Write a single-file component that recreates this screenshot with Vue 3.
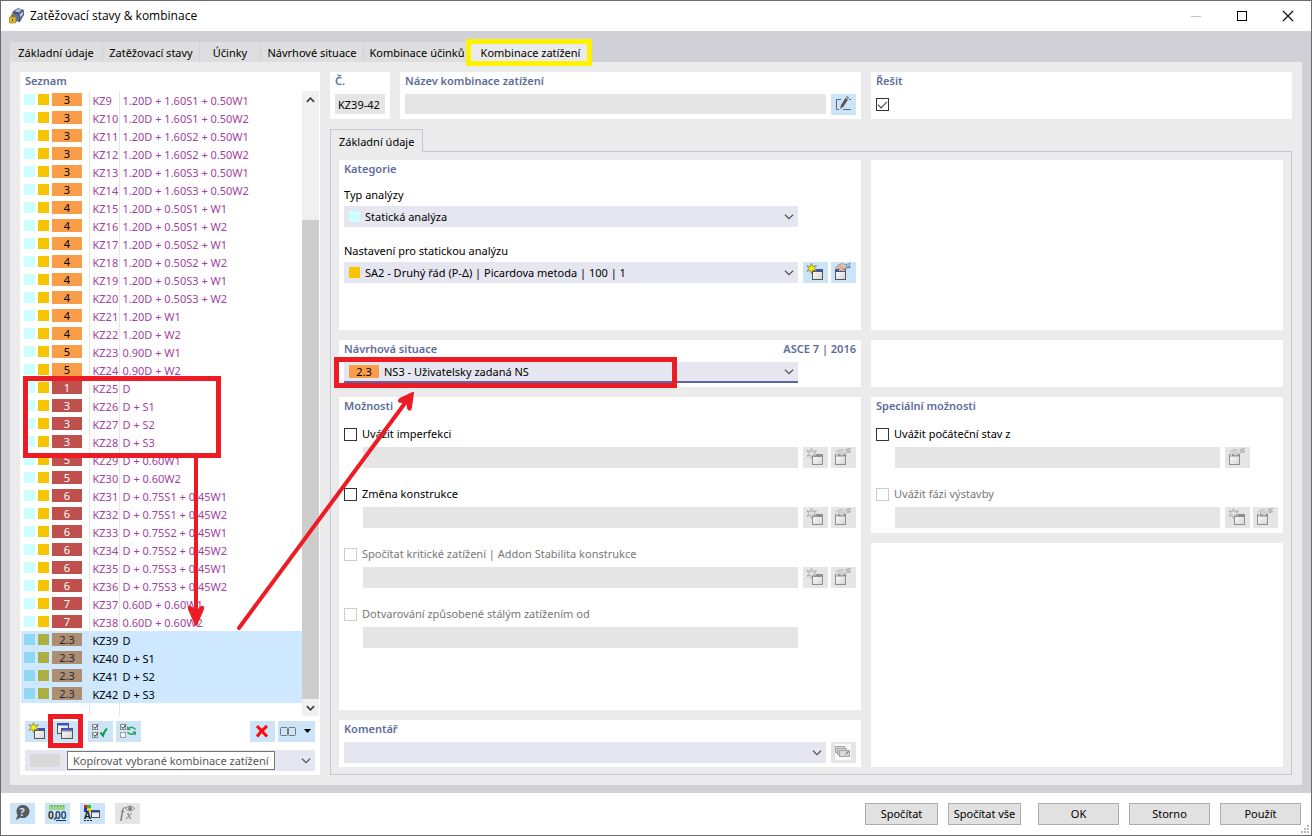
<template>
  <div class="window">
    <!-- Shared icon shapes -->
    <svg class="icon-defs" aria-hidden="true">
      <defs>
        <linearGradient id="paper" x1="0" y1="0" x2="1" y2="1">
          <stop offset="0" stop-color="#ffffff" />
          <stop offset="1" stop-color="#d4d4d4" />
        </linearGradient>
        <symbol id="icon-new" viewBox="0 0 25 21">
          <rect x="9.5" y="7.5" width="10" height="10" fill="url(#paper)" stroke="#555" />
          <rect x="10" y="7" width="9" height="3" fill="#3c50e0" />
          <path d="M9.5 9.5h10" stroke="#555" />
          <path d="M8.500 1.500l1.200 3.200 3.800-1-2.300 2.800 2.300 2.800-3.800-1-1.200 3.200-1.200-3.200-3.300 1 2-2.800-2-2.800 3.300 1z" fill="#fff200" stroke="#6d7340" stroke-width=".7" />
        </symbol>
        <symbol id="icon-new-off" viewBox="0 0 25 21">
          <rect x="9.500" y="7.500" width="10" height="10" fill="url(#paper)" stroke="#8f8f8f" />
          <rect x="9" y="7" width="11" height="3" fill="#8f8f8f" />
          <path d="M8.500 1.500l1.200 3.200 3.800-1-2.300 2.800 2.300 2.800-3.800-1-1.200 3.200-1.200-3.200-3.300 1 2-2.800-2-2.800 3.300 1z" fill="#e2e2e2" stroke="#a0a0a0" stroke-width=".8" />
        </symbol>
        <symbol id="icon-edit" viewBox="0 0 25 21">
          <rect x="4.500" y="7.500" width="10" height="10" fill="url(#paper)" stroke="#555" />
          <path d="M5 8h3" stroke="#3c50e0" stroke-width="2" />
          <path d="M4.500 9.500h10" stroke="#555" />
          <path d="M15 2l5-1-1.500 2.500L20 6l-5 .5z" fill="#5b8fc8" />
          <path d="M15 3l3-1v2l-3 1z" fill="#a9d0f0" />
          <path d="M4.500 5.500L7 3l4-1.500 4 1v4L13 7l-1.500 2L9 8.500 8 6.500l-2 .5z" fill="#dfc3a8" stroke="#9a8069" stroke-width=".6" />
          <path d="M7 5l3-1.500M9 6.500L12 5M11 8l2-2" stroke="#9a8069" stroke-width=".6" />
        </symbol>
        <symbol id="icon-edit-off" viewBox="0 0 25 21">
          <rect x="4.500" y="7.500" width="10" height="10" fill="url(#paper)" stroke="#8f8f8f" />
          <path d="M4 8.500h11" stroke="#8f8f8f" stroke-width="2" />
          <path d="M5 8h2" stroke="#fff" />
          <path d="M14 2.500l6-1-1.500 2L20 5.500l-5 1z" fill="#c4c4c4" />
          <path d="M15 2.500l5-1M17 5l3-.5" stroke="#a5a5a5" stroke-width=".8" />
          <path d="M5 5l3-2 4-1 3 1v3.500L13 7l-1.500 1.500L9 8 8 6.500 5.500 7z" fill="#dcdcdc" />
          <path d="M5 5l3-2 4-.5M7 6l3-2M9.500 7.500l3-3M12 8.500l2-3" fill="none" stroke="#adadad" stroke-width=".8" />
        </symbol>
        <symbol id="icon-copy" viewBox="0 0 25 21">
          <rect x="4.500" y="2.500" width="11" height="10" fill="url(#paper)" stroke="#555" />
          <path d="M5 3.500h10" stroke="#3c50e0" stroke-width="2" />
          <rect x="8.500" y="7.500" width="11" height="10" fill="url(#paper)" stroke="#555" />
          <path d="M9 8.500h10" stroke="#3c50e0" stroke-width="2" />
          <path d="M9 10h10" stroke="#555" stroke-width=".7" />
        </symbol>
        <symbol id="icon-check-all" viewBox="0 0 25 21">
          <g fill="#f4f4f4" stroke="#8a8a8a">
            <rect x="4.500" y="3.500" width="5" height="5" />
            <rect x="4.500" y="11.500" width="5" height="5" />
          </g>
          <path d="M5.500 5.500l1.500 2 3-4M5.500 13.500l1.500 2 3-4" fill="none" stroke="#333" />
          <path d="M12.500 11.500l2.500 3q1-4 4-7" fill="none" stroke="#0b9f43" stroke-width="2" />
        </symbol>
        <symbol id="icon-check-swap" viewBox="0 0 25 21">
          <g fill="#f4f4f4" stroke="#8a8a8a">
            <rect x="4.500" y="3.500" width="5" height="5" />
            <rect x="4.500" y="11.500" width="5" height="5" stroke="#a0a0a0" />
          </g>
          <path d="M5.500 5.500l1.500 2 3-4" fill="none" stroke="#333" />
          <path d="M19.500 8.500q-3-3.500-6.500-1.500M11.500 11q3 3.500 6.500 1.500" fill="none" stroke="#2ba35a" stroke-width="1.600" />
          <path d="M11 5v4h4zM20 14.500v-4h-4z" fill="#2ba35a" />
        </symbol>
        <symbol id="icon-delete" viewBox="0 0 25 21">
          <path d="M7 5l10 10.500M17 5Q12 9 7 15.500" fill="none" stroke="#f90d0d" stroke-width="3" />
        </symbol>
        <symbol id="icon-columns" viewBox="0 0 37 21">
          <rect x="2.500" y="6.500" width="7" height="8" rx="1" fill="none" stroke="#777" />
          <rect x="10.500" y="6.500" width="7" height="8" rx="1" fill="none" stroke="#777" />
          <path d="M26 8h7l-3.500 4z" fill="#000" />
        </symbol>
        <symbol id="icon-rename" viewBox="0 0 25 21">
          <path d="M10 5.500H5.500v10H8M12 15.500h8M18 5.500h2" fill="none" stroke="#666" />
          <path d="M9 15l1-4 4.500-7 2.500 1.500-4.500 7z" fill="#555" />
          <path d="M15 3.300l.8-1.300 2.300 1.500-.7 1.200z" fill="#777" />
        </symbol>
        <symbol id="icon-comments" viewBox="0 0 25 21">
          <rect x="4" y="2" width="16" height="16" fill="#fafafa" />
          <g fill="#d8d8d8" stroke="#a4a4a4">
            <rect x="4.500" y="4.500" width="9" height="6" />
            <rect x="6.500" y="6.500" width="9" height="6" />
            <rect x="8.500" y="8.500" width="10" height="6" />
          </g>
          <path d="M14 13l1-2 2-2 1 1-2 2z" fill="#888" />
        </symbol>
        <symbol id="icon-help" viewBox="0 0 25 21">
          <path d="M12.500 2a6.500 6.500 0 1 1-2 12.500L6 17l1.500-5A6.500 6.500 0 0 1 12.500 2z" fill="#58595b" />
          <text x="9.500" y="13" font-size="11" font-weight="700" fill="#cce4f7">?</text>
        </symbol>
        <symbol id="icon-units" viewBox="0 0 25 21">
          <rect x="4" y="2" width="16" height="5" fill="#9bd68a" />
          <path d="M6.500 2v2M9.500 2v2M12.500 2v2M15.500 2v2M18.500 2v2" stroke="#4f8f43" stroke-width=".7" />
          <text x="3" y="16" font-size="10" font-weight="600" fill="#222">0,</text>
          <text x="10" y="16" font-size="10" font-weight="600" fill="#1c3763">00</text>
          <path d="M11 17.500h10" stroke="#1c3763" />
        </symbol>
        <symbol id="icon-display" viewBox="0 0 25 21">
          <path d="M4 2h4v4H4z" fill="#e02020" />
          <path d="M7 2h4v4H7z" fill="#20c030" />
          <path d="M4 5h4v4H4z" fill="#2030e0" />
          <path d="M7 5h4v4H7z" fill="#f0d000" />
          <text x="4" y="16" font-size="10" font-weight="700" fill="#222">A</text>
          <path d="M4 17.500h8" stroke="#222" stroke-dasharray="2 1" />
          <rect x="11.500" y="7.500" width="8" height="7" fill="#eee" stroke="#555" />
          <path d="M12 8.500h7" stroke="#30489a" stroke-width="2" />
        </symbol>
        <symbol id="icon-fx" viewBox="0 0 25 21">
          <text x="5" y="15" font-size="15" font-style="italic" font-family="Liberation Serif, serif" fill="#6c6c6c">f</text>
          <text x="11" y="16" font-size="13" font-style="italic" font-family="Liberation Serif, serif" fill="#777">x</text>
          <path d="M10.500 5.500q4.500-5 9 0-4.500 5-9 0z" fill="#e5e5e5" stroke="#888" />
          <circle cx="15" cy="5.500" r="1.800" fill="#777" />
        </symbol>
        <symbol id="icon-chevron" viewBox="0 0 10 6">
          <path d="M1 .7l4 4 4-4" fill="none" stroke="#555" stroke-width="1.300" />
        </symbol>
      </defs>
    </svg>

    <header class="title-bar">
      <svg class="app-icon" viewBox="0 0 16 16">
        <path d="M4 3l5-3 6 2v5l-4 7-5-1-4-5z" fill="#5d7396" />
        <path d="M6 3l3-2 4 1-3 3zM11 6l3-2v3l-3 4z" fill="#b6cbe8" />
        <path d="M4 4l5 1 2 5-1 4M9 5l5-3M11 10l4-4M2 8l7-3" fill="none" stroke="#2f405f" stroke-width=".8" />
        <path d="M2 10V8q2-3 4 0v2" fill="none" stroke="#b8902a" stroke-width="1.200" />
        <rect x="0" y="9" width="7" height="6" rx="1" fill="#e3b52e" stroke="#92701d" stroke-width=".6" />
        <path d="M3.500 11v2" stroke="#5b4310" />
      </svg>
      <h1 class="window-title">Zatěžovací stavy &amp; kombinace</h1>
      <div class="window-controls">
        <button type="button" class="window-btn" aria-label="Minimalizovat" disabled>
          <svg viewBox="0 0 10 10"><path d="M0 5.500h10" stroke="#c4c4c4" /></svg>
        </button>
        <button type="button" class="window-btn" aria-label="Maximalizovat">
          <svg viewBox="0 0 10 10"><rect x=".5" y=".5" width="9" height="9" fill="none" stroke="#000" /></svg>
        </button>
        <button type="button" class="window-btn" aria-label="Zavřít">
          <svg viewBox="0 0 10 10"><path d="M0 0l10 10M10 0L0 10" stroke="#000" stroke-width="1.100" /></svg>
        </button>
      </div>
    </header>

    <div class="workspace">
      <nav class="main-tabs">
        <button
          v-for="tab in tabs"
          :key="tab"
          type="button"
          class="main-tab"
          :class="{ active: tab === activeTab }"
          @click="activeTab = tab"
        >
          {{ tab }}
        </button>
      </nav>

      <main class="main-panel">
        <section class="card list-card">
          <h2 class="card-title">Seznam</h2>
          <div class="list-area">
            <div class="list-scroll">
              <table class="combo-table">
                <tbody>
                  <tr
                    v-for="row in rows"
                    :key="row.no"
                    :class="{ selected: row.no >= 39 }"
                  >
                    <td class="cell-marks">
                      <div class="marks">
                        <span class="swatch type"></span>
                        <span class="swatch setting"></span>
                        <span class="badge" :class="row.kind">{{ row.situation }}</span>
                      </div>
                    </td>
                    <td class="cell-no">KZ{{ row.no }}</td>
                    <td class="cell-rule">{{ row.rule }}</td>
                  </tr>
                </tbody>
              </table>
              <div class="list-rest"><span></span><span></span><span></span></div>
            </div>
            <div class="scrollbar">
              <button type="button" class="scroll-btn up" aria-label="Nahoru">
                <svg viewBox="0 0 10 6"><path d="M1 5l4-4 4 4" fill="none" stroke="#444" stroke-width="2" /></svg>
              </button>
              <div class="scroll-track"><div class="scroll-thumb"></div></div>
              <button type="button" class="scroll-btn" aria-label="Dolů">
                <svg viewBox="0 0 10 6"><path d="M1 1l4 4 4-4" fill="none" stroke="#444" stroke-width="2" /></svg>
              </button>
            </div>
          </div>
          <div class="list-tools">
            <button type="button" class="icon-btn" aria-label="Nová"><svg><use href="#icon-new" /></svg></button>
            <button type="button" class="icon-btn" aria-label="Kopírovat"><svg><use href="#icon-copy" /></svg></button>
            <button type="button" class="icon-btn group-start" aria-label="Vybrat vše"><svg><use href="#icon-check-all" /></svg></button>
            <button type="button" class="icon-btn" aria-label="Invertovat výběr"><svg><use href="#icon-check-swap" /></svg></button>
            <button type="button" class="icon-btn push-right" aria-label="Smazat"><svg><use href="#icon-delete" /></svg></button>
            <button type="button" class="icon-btn wide" aria-label="Sloupce"><svg><use href="#icon-columns" /></svg></button>
          </div>
          <div class="filter">
            <div class="combo">
              <span class="filter-swatch"></span>
              <select aria-label="Filtr"><option></option></select>
              <svg class="chevron"><use href="#icon-chevron" /></svg>
            </div>
            <div class="tooltip" role="tooltip">Kopírovat vybrané kombinace zatížení</div>
          </div>
        </section>

        <div class="detail">
          <div class="detail-head">
            <section class="card">
              <label class="card-title" for="combo-no">Č.</label>
              <input id="combo-no" class="field" type="text" value="KZ39-42" readonly />
            </section>
            <section class="card">
              <label class="card-title" for="combo-name">Název kombinace zatížení</label>
              <div class="line">
                <input id="combo-name" class="field" type="text" readonly />
                <button type="button" class="icon-btn" aria-label="Upravit název"><svg><use href="#icon-rename" /></svg></button>
              </div>
            </section>
            <section class="card">
              <label class="card-title" for="solve">Řešit</label>
              <div class="line solve-line">
                <input id="solve" v-model="solve" class="check" type="checkbox" />
              </div>
            </section>
          </div>

          <div class="sub-tabs">
            <button type="button" class="sub-tab">Základní údaje</button>
          </div>

          <div class="detail-body">
            <div class="column">
              <section class="card category">
                <h2 class="card-title">Kategorie</h2>
                <label class="field-label" for="analysis-type">Typ analýzy</label>
                <div class="line">
                  <div class="combo">
                    <span class="swatch type"></span>
                    <select id="analysis-type"><option>Statická analýza</option></select>
                    <svg class="chevron"><use href="#icon-chevron" /></svg>
                  </div>
                  <div class="slot"></div>
                </div>
                <label class="field-label second" for="analysis-settings">Nastavení pro statickou analýzu</label>
                <div class="line">
                  <div class="combo">
                    <span class="swatch setting"></span>
                    <select id="analysis-settings"><option>SA2 - Druhý řád (P-Δ) | Picardova metoda | 100 | 1</option></select>
                    <svg class="chevron"><use href="#icon-chevron" /></svg>
                  </div>
                  <div class="slot">
                    <button type="button" class="icon-btn" aria-label="Nové nastavení"><svg><use href="#icon-new" /></svg></button>
                    <button type="button" class="icon-btn" aria-label="Upravit nastavení"><svg><use href="#icon-edit" /></svg></button>
                  </div>
                </div>
              </section>

              <section class="card">
                <div class="title-line">
                  <label class="card-title" for="situation">Návrhová situace</label>
                  <span class="card-title">ASCE 7 | 2016</span>
                </div>
                <div class="line">
                  <div class="combo focused">
                    <span class="badge strength">2.3</span>
                    <select id="situation"><option>NS3 - Uživatelsky zadaná NS</option></select>
                    <svg class="chevron"><use href="#icon-chevron" /></svg>
                  </div>
                  <div class="slot"></div>
                </div>
              </section>

              <section class="card grow">
                <h2 class="card-title">Možnosti</h2>
                <div class="options">
                  <div v-for="option in options" :key="option.id" class="option">
                    <div class="option-head" :class="{ disabled: option.disabled }">
                      <input :id="option.id" class="check" type="checkbox" :disabled="option.disabled" />
                      <label :for="option.id">{{ option.label }}</label>
                    </div>
                    <div class="line option-line">
                      <input class="field" type="text" :aria-label="option.label" disabled />
                      <div class="slot">
                        <template v-if="option.buttons">
                          <button type="button" class="icon-btn" aria-label="Nový" disabled><svg><use href="#icon-new-off" /></svg></button>
                          <button type="button" class="icon-btn" aria-label="Upravit" disabled><svg><use href="#icon-edit-off" /></svg></button>
                        </template>
                      </div>
                    </div>
                  </div>
                </div>
              </section>

              <section class="card">
                <label class="card-title" for="comment">Komentář</label>
                <div class="line">
                  <div class="combo">
                    <select id="comment"><option></option></select>
                    <svg class="chevron"><use href="#icon-chevron" /></svg>
                  </div>
                  <button type="button" class="icon-btn" aria-label="Komentáře" disabled><svg><use href="#icon-comments" /></svg></button>
                </div>
              </section>
            </div>

            <div class="column">
              <section class="card category"></section>
              <section class="card short"></section>
              <section class="card special">
                <h2 class="card-title">Speciální možnosti</h2>
                <div class="options">
                  <div v-for="option in specialOptions" :key="option.id" class="option">
                    <div class="option-head" :class="{ disabled: option.disabled }">
                      <input :id="option.id" class="check" type="checkbox" :disabled="option.disabled" />
                      <label :for="option.id">{{ option.label }}</label>
                    </div>
                    <div class="line option-line">
                      <input class="field" type="text" :aria-label="option.label" disabled />
                      <div class="slot">
                        <button v-if="option.canCreate" type="button" class="icon-btn" aria-label="Nový" disabled><svg><use href="#icon-new-off" /></svg></button>
                        <button type="button" class="icon-btn" aria-label="Upravit" disabled><svg><use href="#icon-edit-off" /></svg></button>
                      </div>
                    </div>
                  </div>
                </div>
              </section>
              <section class="card grow"></section>
            </div>
          </div>
        </div>
      </main>
    </div>

    <footer class="footer">
      <div class="footer-tools">
        <button type="button" class="icon-btn" aria-label="Nápověda"><svg><use href="#icon-help" /></svg></button>
        <button type="button" class="icon-btn" aria-label="Jednotky"><svg><use href="#icon-units" /></svg></button>
        <button type="button" class="icon-btn" aria-label="Zobrazení"><svg><use href="#icon-display" /></svg></button>
        <button type="button" class="icon-btn" aria-label="Funkce" disabled><svg><use href="#icon-fx" /></svg></button>
      </div>
      <div class="footer-actions">
        <button type="button" class="action small">Spočítat</button>
        <button type="button" class="action small">Spočítat vše</button>
        <button type="button" class="action after-gap">OK</button>
        <button type="button" class="action">Storno</button>
        <button type="button" class="action">Použít</button>
      </div>
      <svg class="grip" viewBox="0 0 8 8">
        <path d="M6 0h2v2H6zM3 3h2v2H3zM6 3h2v2H6zM0 6h2v2H0zM3 6h2v2H3zM6 6h2v2H6z" fill="#b8b8b8" />
      </svg>
    </footer>

    <!-- Highlight marks drawn over the dialog -->
    <svg class="marks-layer" width="1312" height="836" viewBox="0 0 1312 836" aria-hidden="true">
      <rect x="468.500" y="41.500" width="121" height="22" fill="none" stroke="#fff200" stroke-width="5" />
      <g fill="none" stroke="#ed1c24" stroke-width="5">
        <rect x="25.500" y="378.500" width="193" height="77" />
        <rect x="50.500" y="716.500" width="30" height="29" />
        <rect x="336.500" y="359.500" width="338" height="26" />
      </g>
      <g fill="none" stroke="#ed1c24" stroke-width="4" stroke-linecap="round" stroke-linejoin="round">
        <path d="M196 457v166" />
        <path d="M239 628L411 395" />
      </g>
      <g fill="#ed1c24" stroke="#ed1c24" stroke-width="2" stroke-linejoin="round">
        <path d="M196 625l-7-16q-1-4 3-1l4 6 4-6q4-3 3 1z" />
        <path d="M413 393l-13 6q-3 3 2 3l5-1 1 7q2 4 3-1z" />
      </g>
    </svg>
  </div>
</template>

<script setup>
import { ref } from 'vue'

const tabs = [
  'Základní údaje',
  'Zatěžovací stavy',
  'Účinky',
  'Návrhové situace',
  'Kombinace účinků',
  'Kombinace zatížení'
]
const activeTab = ref('Kombinace zatížení')
const solve = ref(true)

// [design situation, badge kind, load rule], numbered from KZ9
const rows = [
  ['3', 'strength', '1.20D + 1.60S1 + 0.50W1'],
  ['3', 'strength', '1.20D + 1.60S1 + 0.50W2'],
  ['3', 'strength', '1.20D + 1.60S2 + 0.50W1'],
  ['3', 'strength', '1.20D + 1.60S2 + 0.50W2'],
  ['3', 'strength', '1.20D + 1.60S3 + 0.50W1'],
  ['3', 'strength', '1.20D + 1.60S3 + 0.50W2'],
  ['4', 'strength', '1.20D + 0.50S1 + W1'],
  ['4', 'strength', '1.20D + 0.50S1 + W2'],
  ['4', 'strength', '1.20D + 0.50S2 + W1'],
  ['4', 'strength', '1.20D + 0.50S2 + W2'],
  ['4', 'strength', '1.20D + 0.50S3 + W1'],
  ['4', 'strength', '1.20D + 0.50S3 + W2'],
  ['4', 'strength', '1.20D + W1'],
  ['4', 'strength', '1.20D + W2'],
  ['5', 'strength', '0.90D + W1'],
  ['5', 'strength', '0.90D + W2'],
  ['1', 'service', 'D'],
  ['3', 'service', 'D + S1'],
  ['3', 'service', 'D + S2'],
  ['3', 'service', 'D + S3'],
  ['5', 'service', 'D + 0.60W1'],
  ['5', 'service', 'D + 0.60W2'],
  ['6', 'service', 'D + 0.75S1 + 0.45W1'],
  ['6', 'service', 'D + 0.75S1 + 0.45W2'],
  ['6', 'service', 'D + 0.75S2 + 0.45W1'],
  ['6', 'service', 'D + 0.75S2 + 0.45W2'],
  ['6', 'service', 'D + 0.75S3 + 0.45W1'],
  ['6', 'service', 'D + 0.75S3 + 0.45W2'],
  ['7', 'service', '0.60D + 0.60W1'],
  ['7', 'service', '0.60D + 0.60W2'],
  ['2.3', 'user', 'D'],
  ['2.3', 'user', 'D + S1'],
  ['2.3', 'user', 'D + S2'],
  ['2.3', 'user', 'D + S3']
].map(([situation, kind, rule], index) => ({ no: index + 9, situation, kind, rule }))

const options = [
  { id: 'imperfection', label: 'Uvážit imperfekci', buttons: true },
  { id: 'modification', label: 'Změna konstrukce', buttons: true },
  { id: 'critical-load', label: 'Spočítat kritické zatížení | Addon Stabilita konstrukce', buttons: true, disabled: true },
  { id: 'creep', label: 'Dotvarování způsobené stálým zatížením od', disabled: true }
]

const specialOptions = [
  { id: 'initial-state', label: 'Uvážit počáteční stav z' },
  { id: 'construction-stage', label: 'Uvážit fázi výstavby', canCreate: true, disabled: true }
]
</script>

<style>
body {
  margin: 0;
}
</style>

<style scoped>
.window {
  position: relative;
  display: flex;
  flex-direction: column;
  min-height: 100vh;
  box-sizing: border-box;
  overflow: hidden;
  border: 1px solid #6b6b6b;
  background: #fff;
  color: #000;
  font-family: "Noto Sans", "Open Sans", sans-serif;
  font-size: 11px;
  line-height: 18px;
}

.window *,
.window *::before {
  box-sizing: border-box;
}

button,
input,
select {
  margin: 0;
  padding: 0;
  border: 0;
  border-radius: 0;
  color: inherit;
  font: inherit;
}

.icon-defs {
  position: absolute;
  width: 0;
  height: 0;
}

/* Title bar */
.title-bar {
  display: flex;
  align-items: center;
  height: 30px;
  padding-left: 8px;
}

.app-icon {
  width: 16px;
  height: 16px;
  margin-right: 5px;
}

.window-title {
  margin: 0;
  font-family: "Open Sans", "Noto Sans", sans-serif;
  font-size: 12px;
  font-weight: 400;
}

.window-controls {
  display: flex;
  margin-left: auto;
}

.window-btn {
  display: flex;
  align-items: center;
  justify-content: center;
  width: 46px;
  height: 30px;
  background: none;
}

.window-btn svg {
  width: 10px;
  height: 10px;
  overflow: visible;
}

/* Main tabs */
.workspace {
  display: flex;
  flex: 1;
  flex-direction: column;
  padding: 11px 9px 8px;
  background: #d1d0d6;
}

.main-tabs {
  display: grid;
  grid-template-columns: 93px 97px 61px 103px 107px 120px;
}

.main-tab {
  height: 20px;
  padding-top: 2px;
  border-right: 1px solid #d1d0d6;
  background: #dedede;
  white-space: nowrap;
}

.main-tab.active {
  background: #ebebeb;
}

.main-panel {
  display: flex;
  flex: 1;
  gap: 10px;
  padding: 10px;
  background: #ebebeb;
}

.card {
  padding: 0 5px 4px;
  background: #fff;
}

.card-title {
  display: block;
  margin: 0 0 4px;
  color: #5d6d99;
  font-size: 11px;
  font-weight: 600;
  line-height: 18px;
}

.title-line {
  display: flex;
  justify-content: space-between;
}

/* List */
.list-card {
  display: flex;
  flex: none;
  flex-direction: column;
  width: 300px;
}

.list-card .card-title {
  margin-bottom: 1px;
}

.list-area {
  display: flex;
  flex: 1;
  margin: 0 -4px 5px;
}

.list-scroll {
  display: flex;
  flex: 1;
  flex-direction: column;
}

.combo-table {
  width: 100%;
  border-collapse: collapse;
  table-layout: fixed;
  color: #a23fa2;
}

.combo-table tr {
  height: 18px;
}

.combo-table td {
  height: 18px;
  padding: 2px 0 0 3px;
  border-left: 1px solid #e6e6e6;
  line-height: 16px;
  white-space: nowrap;
}

.combo-table .cell-marks {
  width: 68px;
  border-left: 0;
  padding: 0 0 0 3px;
}

.combo-table .cell-no {
  width: 30px;
}

.combo-table .selected {
  background: #cde8ff;
  color: #000;
}

.marks {
  display: flex;
  align-items: center;
  gap: 3px;
  height: 18px;
  padding-bottom: 1px;
}

.swatch {
  flex: none;
  width: 11px;
  height: 11px;
}

.swatch.type {
  background: #ccffff;
}

.swatch.setting {
  background: #f7c400;
}

.selected .swatch.type {
  background: #8fd7f5;
}

.selected .swatch.setting {
  background: #acaf41;
}

.badge {
  flex: none;
  width: 30px;
  height: 13px;
  color: #000;
  line-height: 13px;
  text-align: center;
}

.badge.strength {
  background: #f99d49;
}

.badge.service {
  background: #c0504d;
  color: #fff;
}

.badge.user {
  background: #ad8e70;
  color: #1d2a36;
}

.list-rest {
  display: flex;
  flex: 1;
}

.list-rest span {
  width: 30px;
  border-right: 1px solid #e6e6e6;
}

.list-rest span:first-child {
  width: 69px;
}

.list-rest span:last-child {
  border-right: 0;
}

.scrollbar {
  display: flex;
  flex-direction: column;
  width: 17px;
  background: #f0f0f0;
}

.scroll-btn {
  height: 17px;
  padding: 0;
  background: #f0f0f0;
  line-height: 0;
}

.scroll-btn svg {
  width: 9px;
  height: 6px;
}

.scroll-track {
  display: flex;
  flex: 1;
  flex-direction: column;
  justify-content: flex-end;
}

.scroll-thumb {
  height: 81%;
  background: #cdcdcd;
}

.list-tools {
  display: flex;
  gap: 3px;
  margin-bottom: 8px;
}

.icon-btn {
  flex: none;
  width: 25px;
  height: 21px;
  background: #cce4f7;
}

.icon-btn:disabled {
  background: #e5e5e5;
}

.icon-btn svg {
  display: block;
  width: 100%;
  height: 21px;
}

.icon-btn.wide {
  width: 37px;
}

.icon-btn.group-start {
  margin-left: 7px;
}

.icon-btn.push-right {
  margin-left: auto;
}

.filter {
  position: relative;
}

.filter-swatch {
  width: 30px;
  height: 13px;
  background: #d9d9d9;
}

.tooltip {
  position: absolute;
  top: 1px;
  left: 42px;
  height: 19px;
  padding: 0 5px;
  border: 1px solid #767676;
  background: #fff;
  color: #575757;
  line-height: 17px;
  white-space: nowrap;
}

/* Inputs */
.line {
  display: flex;
  gap: 5px;
}

.slot {
  display: flex;
  flex: none;
  gap: 3px;
  width: 53px;
}

.field {
  flex: 1;
  width: 100%;
  min-width: 0;
  height: 21px;
  background: #e5e5e5;
}

.detail-head .field {
  height: 20px;
  padding: 0 3px;
}

.combo {
  display: flex;
  flex: 1;
  align-items: center;
  min-width: 0;
  height: 21px;
  padding: 0 4px 0 5px;
  background: #e6e6f1;
}

.combo.focused {
  border-bottom: 2px solid #5f65a5;
}

.combo select {
  flex: 1;
  min-width: 0;
  height: 19px;
  padding-left: 5px;
  appearance: none;
  background: none;
}

.chevron {
  flex: none;
  width: 10px;
  height: 6px;
  pointer-events: none;
}

.check {
  flex: none;
  display: grid;
  place-items: center;
  width: 13px;
  height: 13px;
  border: 1px solid #333;
  background: #fff;
  appearance: none;
}

.check:checked::before {
  content: "";
  width: 9px;
  height: 5px;
  margin-bottom: 3px;
  border-bottom: 1px solid #333;
  border-left: 1px solid #333;
  transform: rotate(-45deg);
}

.check:disabled {
  border-color: #ccc;
}

/* Detail */
.detail {
  display: flex;
  flex: 1;
  flex-direction: column;
  min-width: 0;
}

.detail-head {
  display: grid;
  grid-template-columns: 60px minmax(0, 461fr) minmax(0, 421fr);
  gap: 10px;
  height: 47px;
}

.solve-line {
  align-items: center;
  height: 21px;
}

.sub-tabs {
  display: flex;
  margin-top: 10px;
}

.sub-tab {
  height: 23px;
  margin-bottom: -1px;
  padding: 2px 8px 0;
  border: 1px solid #c6c5d3;
  border-bottom: 0;
  background: #ebebeb;
  z-index: 1;
}

.detail-body {
  display: grid;
  flex: 1;
  grid-template-columns: minmax(0, 522fr) minmax(0, 412fr);
  gap: 10px;
  padding: 8px 8px 7px;
  border: 1px solid #c6c5d3;
}

.column {
  display: flex;
  flex-direction: column;
  gap: 10px;
}

.category {
  min-height: 170px;
}

.category .card-title {
  margin-bottom: 8px;
}

.short {
  min-height: 47px;
}

.special {
  min-height: 136px;
}

.grow {
  flex: 1;
}

.field-label {
  display: block;
  margin-bottom: 2px;
}

.field-label.second {
  margin-top: 15px;
}

.options {
  display: flex;
  flex-direction: column;
  gap: 16px;
  padding-top: 5px;
}

.option-head {
  display: flex;
  align-items: center;
  gap: 5px;
  height: 20px;
  margin-bottom: 3px;
}

.option-line {
  padding-left: 19px;
}

.option-head.disabled {
  color: #777;
}

/* Footer */
.footer {
  position: relative;
  display: flex;
  justify-content: space-between;
  padding: 10px 10px 10px 9px;
}

.footer-tools,
.footer-actions {
  display: flex;
  gap: 10px;
}

.action {
  width: 81px;
  height: 22px;
  border: 1px solid #adadad;
  background: #e1e1e1;
}

.action.small {
  width: 73px;
}

.action.after-gap {
  margin-left: 7px;
}

.grip {
  position: absolute;
  right: 2px;
  bottom: 2px;
  width: 8px;
  height: 8px;
}

.marks-layer {
  position: absolute;
  top: -1px;
  left: -1px;
  pointer-events: none;
}
</style>
